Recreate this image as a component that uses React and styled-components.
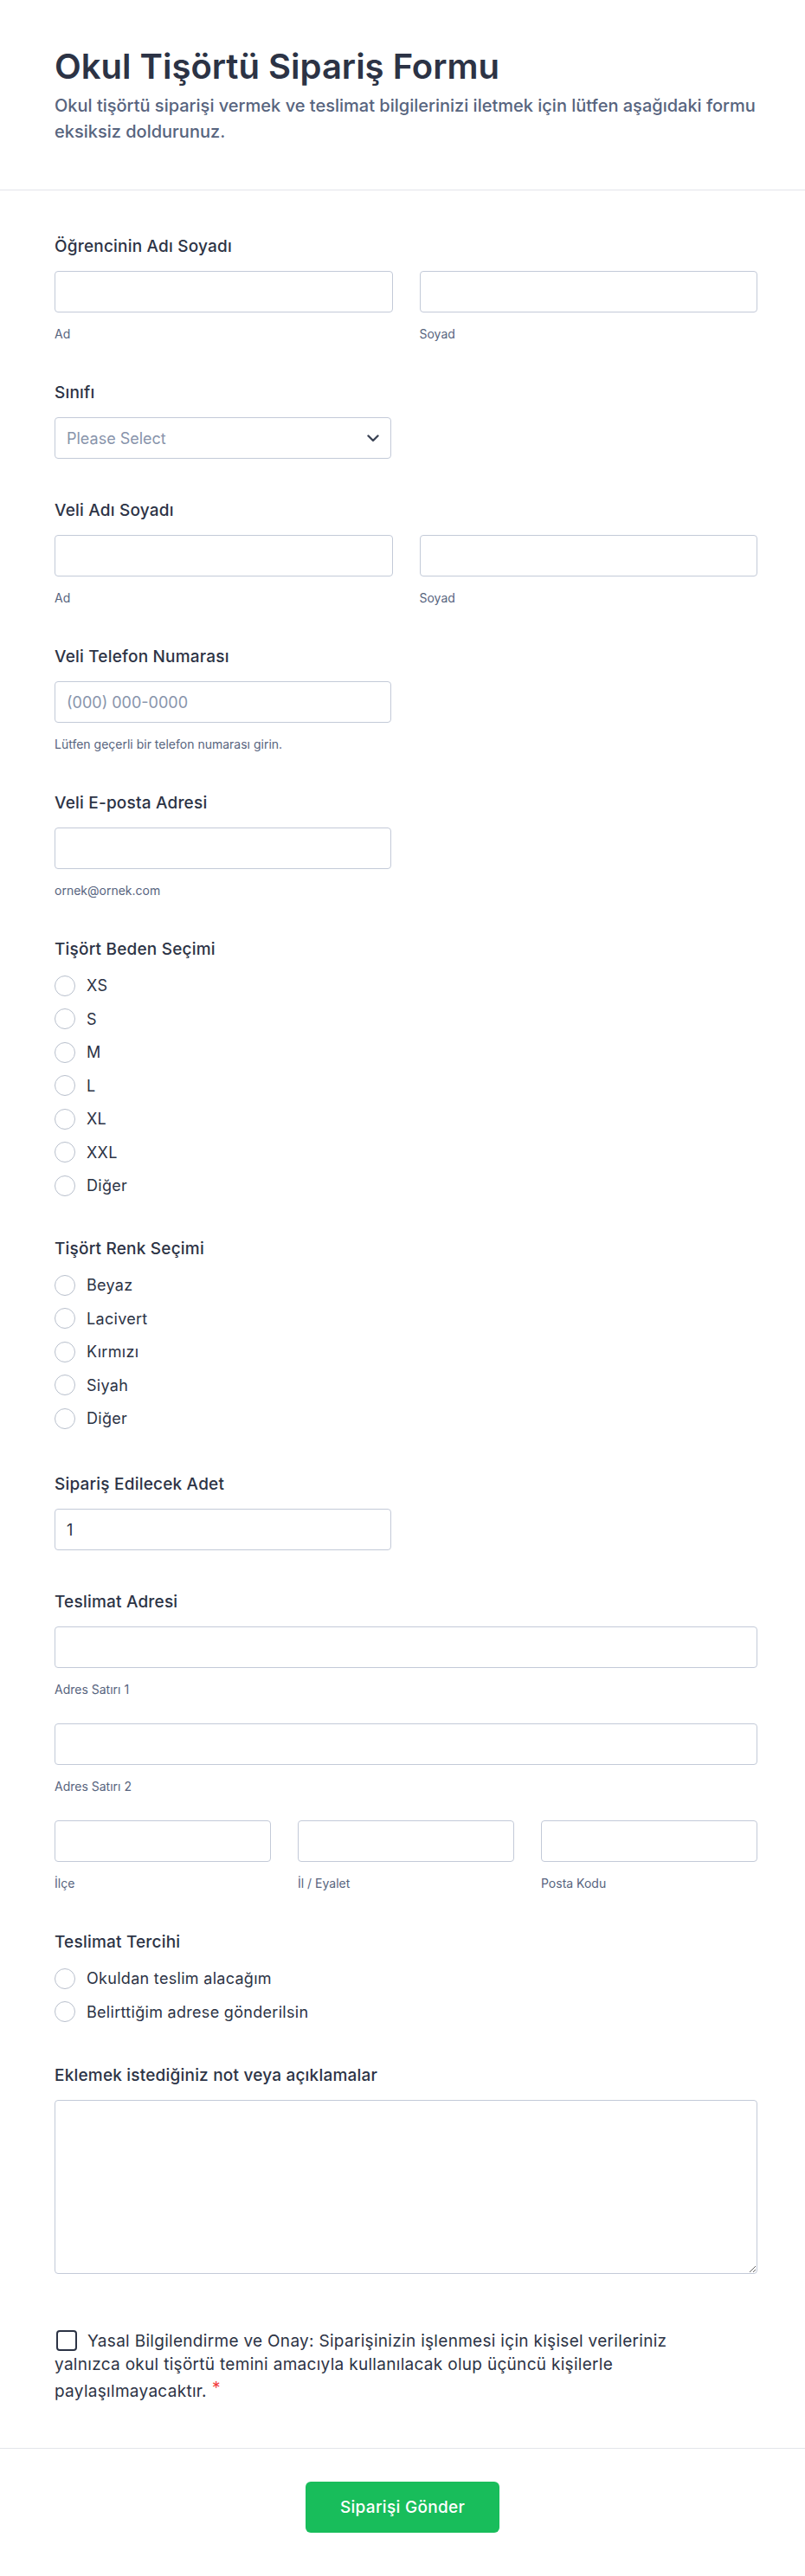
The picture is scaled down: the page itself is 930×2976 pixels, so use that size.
import React from "react";
import styled, { createGlobalStyle } from "styled-components";

const GlobalStyle = createGlobalStyle`
  html, body { margin: 0; padding: 0; background: #ffffff; }
  * { box-sizing: border-box; }
`;

const Page = styled.div`
  font-family: Inter, "Noto Sans", sans-serif;
  color: #2c3345;
  background: #ffffff;
`;

const Header = styled.header`
  padding: 53px 55px 52px 63px;
  border-bottom: 1px solid #e3e5ea;
`;

const Title = styled.h1`
  margin: 0 0 6px;
  font-size: 40px;
  line-height: 48px;
  font-weight: 600;
  color: #2c3345;
`;

const Subtitle = styled.p`
  margin: 0;
  font-size: 20px;
  line-height: 30px;
  font-weight: 500;
  color: #57647e;
`;

const Body = styled.main`
  padding: 51px 55px 52px 63px;
  display: flex;
  flex-direction: column;
  gap: 46px;
`;

const Field = styled.section`
  display: flex;
  flex-direction: column;
  margin-top: ${(p) => p.$extra || 0}px;
`;

const Label = styled.div`
  font-size: 19px;
  letter-spacing: 0.2px;
  line-height: 27px;
  font-weight: 500;
  color: #2c3345;
  margin-bottom: 15px;
`;

const TextInput = styled.input`
  display: block;
  height: 48px;
  width: ${(p) => (p.$half ? "389px" : "100%")};
  border: 1px solid #c3cad8;
  border-radius: 4px;
  padding: 0 13px;
  font-family: inherit;
  font-size: 18px;
  color: #2c3345;
  background: #ffffff;
  outline: none;
  &::placeholder {
    color: #8894ab;
  }
`;

const SubLabel = styled.div`
  margin-top: 16px;
  font-size: 14px;
  line-height: 17px;
  color: #57647e;
`;

const Columns = styled.div`
  display: grid;
  grid-template-columns: repeat(${(p) => p.$cols}, 1fr);
  column-gap: 31px;
`;

const SubField = styled.div`
  display: flex;
  flex-direction: column;
`;

const Stack = styled.div`
  display: flex;
  flex-direction: column;
  gap: 31px;
`;

const SelectBox = styled.div`
  display: flex;
  align-items: center;
  justify-content: space-between;
  height: 48px;
  width: 389px;
  border: 1px solid #c3cad8;
  border-radius: 4px;
  padding: 0 13px;
  font-size: 18px;
  color: #8894ab;
`;

const RadioList = styled.div`
  display: flex;
  flex-direction: column;
  gap: 11.5px;
`;

const RadioRow = styled.label`
  display: flex;
  align-items: center;
  gap: 13px;
  font-size: 18px;
  letter-spacing: 0.3px;
  line-height: 27px;
  color: #2c3345;
`;

const RadioCircle = styled.span`
  flex-shrink: 0;
  width: 24px;
  height: 24px;
  border-radius: 50%;
  border: 1px solid #b8bfcc;
  background: #ffffff;
`;

const TextArea = styled.textarea`
  display: block;
  width: 100%;
  height: 201px;
  border: 1px solid #c3cad8;
  border-radius: 4px;
  padding: 12px 13px;
  font-family: inherit;
  font-size: 18px;
  color: #2c3345;
  outline: none;
`;

const Consent = styled.p`
  margin: 0;
  max-width: 745px;
  font-size: 19px;
  letter-spacing: 0.3px;
  line-height: 27px;
  color: #2c3345;
`;

const CheckBox = styled.span`
  display: inline-block;
  width: 24px;
  height: 24px;
  border: 2px solid #2c3345;
  border-radius: 4px;
  vertical-align: -5px;
  margin: 0 12px 0 2px;
`;

const Required = styled.span`
  color: #f23a3c;
  margin-left: 6px;
  vertical-align: 4px;
`;

const Footer = styled.footer`
  border-top: 1px solid #e3e5ea;
  padding: 38px 0 49px;
  display: flex;
  justify-content: center;
`;

const SubmitButton = styled.button`
  background: #18bd5b;
  color: #ffffff;
  border: none;
  border-radius: 6px;
  padding: 16px 40px;
  font-family: inherit;
  font-size: 19px;
  letter-spacing: 0.3px;
  line-height: 27px;
  font-weight: 500;
  cursor: pointer;
`;

const Chevron = () => (
  <svg width="14" height="9" viewBox="0 0 14 9" fill="none">
    <polyline
      points="1.5,1.5 7,7 12.5,1.5"
      stroke="#3d4556"
      strokeWidth="2.4"
      strokeLinecap="round"
      strokeLinejoin="round"
    />
  </svg>
);

const Radios = ({ items }) => (
  <RadioList>
    {items.map((t) => (
      <RadioRow key={t}>
        <RadioCircle />
        {t}
      </RadioRow>
    ))}
  </RadioList>
);

const Sub = ({ label, placeholder, value }) => (
  <SubField>
    <TextInput placeholder={placeholder} defaultValue={value} />
    <SubLabel>{label}</SubLabel>
  </SubField>
);

export default function App() {
  return (
    <Page>
      <GlobalStyle />
      <Header>
        <Title>Okul Tişörtü Sipariş Formu</Title>
        <Subtitle>
          Okul tişörtü siparişi vermek ve teslimat bilgilerinizi iletmek için
          lütfen aşağıdaki formu eksiksiz doldurunuz.
        </Subtitle>
      </Header>
      <Body>
        <Field>
          <Label>Öğrencinin Adı Soyadı</Label>
          <Columns $cols={2}>
            <Sub label="Ad" />
            <Sub label="Soyad" />
          </Columns>
        </Field>

        <Field>
          <Label>Sınıfı</Label>
          <SelectBox>
            <span>Please Select</span>
            <Chevron />
          </SelectBox>
        </Field>

        <Field>
          <Label>Veli Adı Soyadı</Label>
          <Columns $cols={2}>
            <Sub label="Ad" />
            <Sub label="Soyad" />
          </Columns>
        </Field>

        <Field>
          <Label>Veli Telefon Numarası</Label>
          <TextInput $half placeholder="(000) 000-0000" />
          <SubLabel>Lütfen geçerli bir telefon numarası girin.</SubLabel>
        </Field>

        <Field>
          <Label>Veli E-posta Adresi</Label>
          <TextInput $half />
          <SubLabel>ornek@ornek.com</SubLabel>
        </Field>

        <Field>
          <Label>Tişört Beden Seçimi</Label>
          <Radios items={["XS", "S", "M", "L", "XL", "XXL", "Diğer"]} />
        </Field>

        <Field>
          <Label>Tişört Renk Seçimi</Label>
          <Radios items={["Beyaz", "Lacivert", "Kırmızı", "Siyah", "Diğer"]} />
        </Field>

        <Field $extra={3}>
          <Label>Sipariş Edilecek Adet</Label>
          <TextInput $half defaultValue="1" />
        </Field>

        <Field>
          <Label>Teslimat Adresi</Label>
          <Stack>
            <Sub label="Adres Satırı 1" />
            <Sub label="Adres Satırı 2" />
            <Columns $cols={3}>
              <Sub label="İlçe" />
              <Sub label="İl / Eyalet" />
              <Sub label="Posta Kodu" />
            </Columns>
          </Stack>
        </Field>

        <Field>
          <Label>Teslimat Tercihi</Label>
          <Radios items={["Okuldan teslim alacağım", "Belirttiğim adrese gönderilsin"]} />
        </Field>

        <Field>
          <Label>Eklemek istediğiniz not veya açıklamalar</Label>
          <TextArea />
        </Field>

        <Field $extra={18}>
          <Consent>
            <CheckBox />
            Yasal Bilgilendirme ve Onay: Siparişinizin işlenmesi için kişisel
            verileriniz yalnızca okul tişörtü temini amacıyla kullanılacak olup
            üçüncü kişilerle paylaşılmayacaktır.
            <Required>*</Required>
          </Consent>
        </Field>
      </Body>
      <Footer>
        <SubmitButton type="button">Siparişi Gönder</SubmitButton>
      </Footer>
    </Page>
  );
}
